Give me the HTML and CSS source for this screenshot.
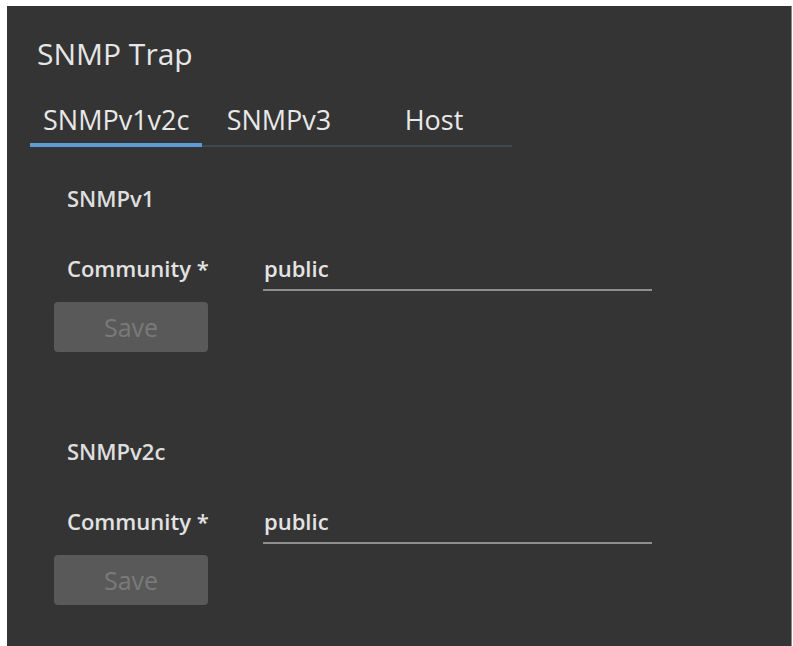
FILE: index.html
```html
<!DOCTYPE html>
<html lang="en">
<head>
<meta charset="utf-8">
<title>SNMP Trap</title>
<link rel="stylesheet" href="styles.css">
</head>
<body>
  <div class="panel">
    <h1 class="title">SNMP Trap</h1>
    <div class="tabs">
      <div class="tab tab-active">SNMPv1v2c</div>
      <div class="tab">SNMPv3</div>
      <div class="tab tab-wide">Host</div>
    </div>

    <section class="group">
      <h2 class="group-title">SNMPv1</h2>
      <div class="field">
        <label class="field-label">Community *</label>
        <div class="field-input">public</div>
      </div>
      <button class="btn-save" disabled>Save</button>
    </section>

    <section class="group group-next">
      <h2 class="group-title">SNMPv2c</h2>
      <div class="field">
        <label class="field-label">Community *</label>
        <div class="field-input">public</div>
      </div>
      <button class="btn-save" disabled>Save</button>
    </section>
  </div>
</body>
</html>
```

FILE: styles.css
```css
html, body {
  margin: 0;
  padding: 0;
  background: #ffffff;
  overflow: hidden;
}

body {
  font-family: "Open Sans", "Noto Sans", sans-serif;
  color: #e4e4e4;
}

.panel {
  margin: 6px 1px 0 7px;
  height: calc(100vh - 6px);
  box-sizing: border-box;
  background: #343434;
  border-right: 1px solid #8a8a8a;
  padding: 28px 0 0 23px;
}

.title {
  margin: 0 0 0 7px;
  font-size: 30px;
  line-height: 40px;
  font-weight: 500;
  color: #e6e6e6;
}

.tabs {
  display: flex;
  width: max-content;
  margin-top: 28px;
  box-shadow: inset 0 -2px 0 #3e4852;
}

.tab {
  min-width: 153px;
  box-sizing: border-box;
  padding: 0 13px 5px;
  text-align: center;
  font-size: 27px;
  line-height: 36px;
  font-weight: 500;
  color: #e8e8e8;
  border-bottom: 4px solid transparent;
}

.tab-wide {
  min-width: 157px;
}

.tab-active {
  border-bottom-color: #5c9bd6;
}

.group {
  margin-top: 36px;
  padding-left: 24px;
}

.group-next {
  margin-top: 84px;
}

.group-title {
  margin: 0 0 0 13px;
  font-size: 22px;
  line-height: 30px;
  font-weight: 600;
  color: #dedede;
}

.field {
  display: flex;
  margin-top: 40px;
}

.field-label {
  width: 196px;
  margin-left: 13px;
  font-size: 22px;
  line-height: 30px;
  font-weight: 600;
  color: #e2e2e2;
}

.field-input {
  width: 388px;
  font-size: 22px;
  line-height: 30px;
  font-weight: 600;
  color: #e4e4e4;
  padding: 0 0 6px 1px;
  border-bottom: 2px solid #8e8e8e;
}

.btn-save {
  display: block;
  margin-top: 11px;
  width: 154px;
  height: 50px;
  background: #595959;
  border: none;
  border-radius: 4px;
  font-family: "Open Sans", "Noto Sans", sans-serif;
  font-size: 25px;
  color: #7a7a7a;
  padding: 0;
}
```
